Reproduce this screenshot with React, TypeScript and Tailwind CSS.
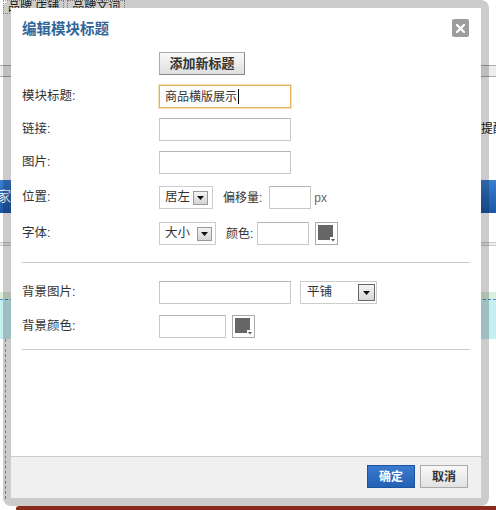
import React from "react";

const font = "font-['Liberation_Sans','Noto_Sans_CJK_SC',sans-serif]";

function Arrow({ big }: { big?: boolean }) {
  return (
    <span
      className={
        big
          ? "flex h-[17px] w-[17px] items-center justify-center border border-[#666] bg-gradient-to-b from-[#f4f4f4] to-[#d8d8d8]"
          : "flex h-[14px] w-[15px] items-center justify-center border border-[#999] bg-gradient-to-b from-[#f4f4f4] to-[#d4d4d4]"
      }
    >
      <svg width="7" height="4" viewBox="0 0 7 4">
        <path d="M0 0 H7 L3.5 4 Z" fill="#111" />
      </svg>
    </span>
  );
}

function Swatch() {
  return (
    <span className="flex h-[23px] w-[23px] items-center justify-center border border-[#aaa] bg-white">
      <svg width="19" height="19" viewBox="0 0 19 19">
        <path d="M1 1 H16 V13 H13 V16 H1 Z" fill="#666" />
        <path d="M14 15 H18 L16 17.5 Z" fill="#555" />
      </svg>
    </span>
  );
}

function Input({ w, children, focus }: { w: string; children?: React.ReactNode; focus?: boolean }) {
  return (
    <div
      className={
        (focus
          ? "border border-[#e2b35c] shadow-[0_0_0_1px_#f5e2b8] "
          : "border border-[#c8c8c8] border-t-[#b4b4b4] ") +
        "flex h-[23px] items-center bg-white pl-[5px] text-[12.5px] text-[#333] " +
        w
      }
    >
      {children}
    </div>
  );
}

function Row({ label, mt, children }: { label: string; mt: string; children: React.ReactNode }) {
  return (
    <div className={"flex h-[23px] items-center " + mt}>
      <div className="w-[137px] text-[12.5px] text-[#333]">{label}</div>
      <div className="flex items-center">{children}</div>
    </div>
  );
}

export default function App() {
  return (
    <div className={"relative h-[510px] w-[496px] overflow-hidden bg-white " + font}>
      {/* page underneath */}
      <div className="flex h-full flex-col">
        <div className="flex h-[14px] gap-[3px] pl-[3px] text-[12px] leading-[13px] text-[#222]">
          <div className="border border-dotted border-[#999] px-[4px]">品牌 店铺</div>
          <div className="border border-dotted border-[#999] px-[4px]">品牌文词</div>
        </div>
        <div className="mt-[51px] h-[12px] border-y border-[#aaa] bg-[#eee]" />
        <div className="mt-[46px] whitespace-nowrap pl-[481px] text-[12px] leading-[12px] text-[#111]">提醒</div>
        <div className="mt-[45px] flex h-[33px] items-center bg-gradient-to-b from-[#3b7fd0] to-[#1b56a6] text-[14px] text-white">
          <span className="-ml-[3px]">家</span>
        </div>
        <div className="mt-[29px] h-[4px] border-y border-[#ccc] bg-[#eee]" />
        <div className="mt-[46px] h-[7px] bg-[#dbeedb]" />
        <div className="h-[40px] border-t border-dashed border-[#4a8fc0] bg-[#c6eff2]" />
        <div className="ml-[5px] h-[160px] w-0 border-l border-dashed border-[#999]" />
        <div className="mt-auto ml-[16px] h-[4px] rounded-tl-[3px] bg-[#8a2a1c]" />
      </div>

      {/* dialog */}
      <div className="absolute left-[3px] top-0 h-[506px] w-[486px] rounded-[8px] bg-black/20 p-[8px]">
        <div className="flex h-full flex-col bg-white">
          <div className="flex items-start justify-between pl-[11px] pr-[12px] pt-[11px]">
            <div className="mt-[1px] text-[14.5px] font-bold leading-[18px] text-[#336699]">编辑模块标题</div>
            <div className="flex h-[18px] w-[17px] items-center justify-center rounded-[2px] bg-[#9d9d9d]">
              <svg width="9" height="9" viewBox="0 0 9 9">
                <path d="M1 1 L8 8 M8 1 L1 8" stroke="#fff" strokeWidth="2.2" strokeLinecap="square" />
              </svg>
            </div>
          </div>

          <div className="flex flex-col px-[11px]">
            <div className="ml-[137px] mt-[14px] flex h-[23px] w-[86px] items-center justify-center border border-[#aaa] border-b-[#888] border-r-[#888] bg-gradient-to-b from-[#fafafa] to-[#dedede] text-[13px] font-bold text-[#333]">
              添加新标题
            </div>

            <Row label="模块标题:" mt="mt-[10px]">
              <Input w="w-[132px]" focus>
                <span className="text-[12px]">商品横版展示</span>
                <span className="ml-[1px] h-[15px] w-[1px] bg-black" />
              </Input>
            </Row>
            <Row label="链接:" mt="mt-[10px]">
              <Input w="w-[132px]" />
            </Row>
            <Row label="图片:" mt="mt-[10px]">
              <Input w="w-[132px]" />
            </Row>
            <Row label="位置:" mt="mt-[12px]">
              <div className="flex h-[23px] w-[54px] items-center justify-between border border-[#ccc] pl-[5px] pr-[4px] text-[12.5px] text-[#333]">
                <span>居左</span>
                <Arrow />
              </div>
              <span className="ml-[10px] text-[12px] text-[#333]">偏移量:</span>
              <div className="ml-[7px]">
                <Input w="w-[42px]" />
              </div>
              <span className="ml-[3px] text-[12px] text-[#666]">px</span>
            </Row>
            <Row label="字体:" mt="mt-[13px]">
              <div className="flex h-[23px] w-[57px] items-center justify-between border border-[#ccc] pl-[5px] pr-[3px] text-[12.5px] text-[#333]">
                <span>大小</span>
                <Arrow />
              </div>
              <span className="ml-[10px] text-[12px] text-[#333]">颜色:</span>
              <div className="ml-[4px]">
                <Input w="w-[52px]" />
              </div>
              <div className="ml-[6px]">
                <Swatch />
              </div>
            </Row>

            <div className="mt-[17px] h-px bg-[#ccc]" />

            <Row label="背景图片:" mt="mt-[18px]">
              <Input w="w-[132px]" />
              <div className="ml-[9px] flex h-[23px] w-[77px] items-center justify-between border border-[#ccc] pl-[6px] pr-[1px] text-[12.5px] text-[#333]">
                <span>平铺</span>
                <Arrow big />
              </div>
            </Row>
            <Row label="背景颜色:" mt="mt-[11px]">
              <Input w="w-[67px]" />
              <div className="ml-[6px]">
                <Swatch />
              </div>
            </Row>

            <div className="mt-[11px] h-px bg-[#ccc]" />
          </div>

          <div className="flex-1" />

          <div className="flex h-[42px] justify-end gap-[5px] border-t border-[#ccc] bg-[#f0f0f0] pr-[13px] pt-[8px]">
            <div className="flex h-[23px] w-[48px] items-center justify-center border border-[#1d54a0] bg-gradient-to-b from-[#3a7bd0] to-[#2460b4] text-[12px] font-bold text-white">
              确定
            </div>
            <div className="flex h-[23px] w-[48px] items-center justify-center border border-[#aaa] bg-gradient-to-b from-[#f8f8f8] to-[#e2e2e2] text-[12px] font-bold text-[#333]">
              取消
            </div>
          </div>
        </div>
      </div>
    </div>
  );
}
